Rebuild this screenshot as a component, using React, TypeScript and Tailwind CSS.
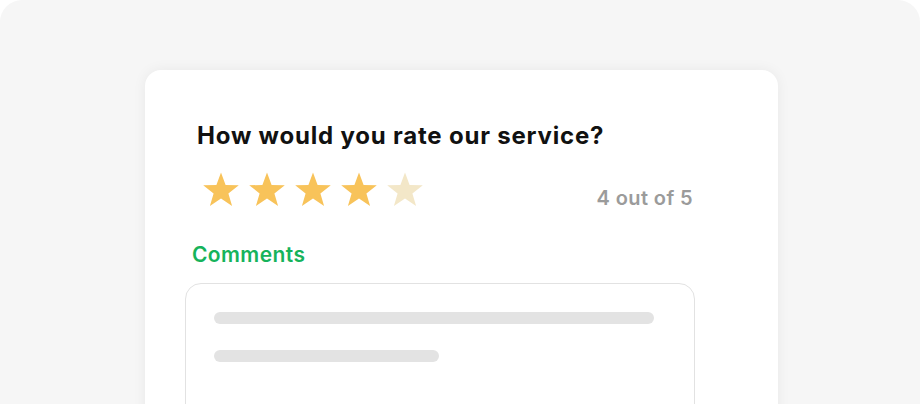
import React from 'react';

function Star({ filled }: { filled: boolean }) {
  return (
    <svg width="40" height="40" viewBox="0 0 40 40" className="shrink-0">
      <path
        d="M20 3.5l4.6 12.4 13.2.4-10.4 8.1 3.7 12.7L20 29.6 8.9 37.1l3.7-12.7L2.2 16.3l13.2-.4z"
        fill={filled ? '#f8c35a' : '#f3e7c8'}
      />
    </svg>
  );
}

export default function App() {
  const rating = 4;

  return (
    <div className="w-[920px] h-[406px] bg-white overflow-hidden" style={{ fontFamily: 'Inter, "Liberation Sans", sans-serif' }}>
      <div className="h-[404px] rounded-t-[22px] bg-[#f6f6f6] pt-[70px] pl-[145px] overflow-hidden">
        <div className="w-[633px] h-[400px] bg-white rounded-t-[16px] shadow-[0_0_14px_rgba(0,0,0,0.06)] pt-[51px] pl-[52px] pr-[85px]">
          <h2 className="text-[24px] leading-[30px] font-bold text-[#111] tracking-[0.8px]">
            How would you rate our service?
          </h2>

          <div className="flex items-start justify-between mt-[18px]">
            <div className="flex items-center gap-[6px] ml-[4px]">
              {[1, 2, 3, 4, 5].map(i => (
                <Star key={i} filled={i <= rating} />
              ))}
            </div>
            <span className="text-[20px] leading-[24px] font-semibold text-[#9b9b9b] mt-[17px] tracking-[0.4px]">
              {rating} out of 5
            </span>
          </div>

          <div className="mt-[32px] -ml-[5px] text-[21px] leading-[26px] font-semibold text-[#16b35b] tracking-[0.4px]">
            Comments
          </div>

          <div className="mt-[15px] -ml-[12px] w-[510px] h-[140px] rounded-[16px] border border-[#e2e2e2] pt-[28px] px-[28px]">
            <div className="h-[12px] w-[440px] rounded-full bg-[#e3e3e3]" />
            <div className="h-[12px] w-[225px] rounded-full bg-[#e3e3e3] mt-[26px]" />
          </div>
        </div>
      </div>
    </div>
  );
}
